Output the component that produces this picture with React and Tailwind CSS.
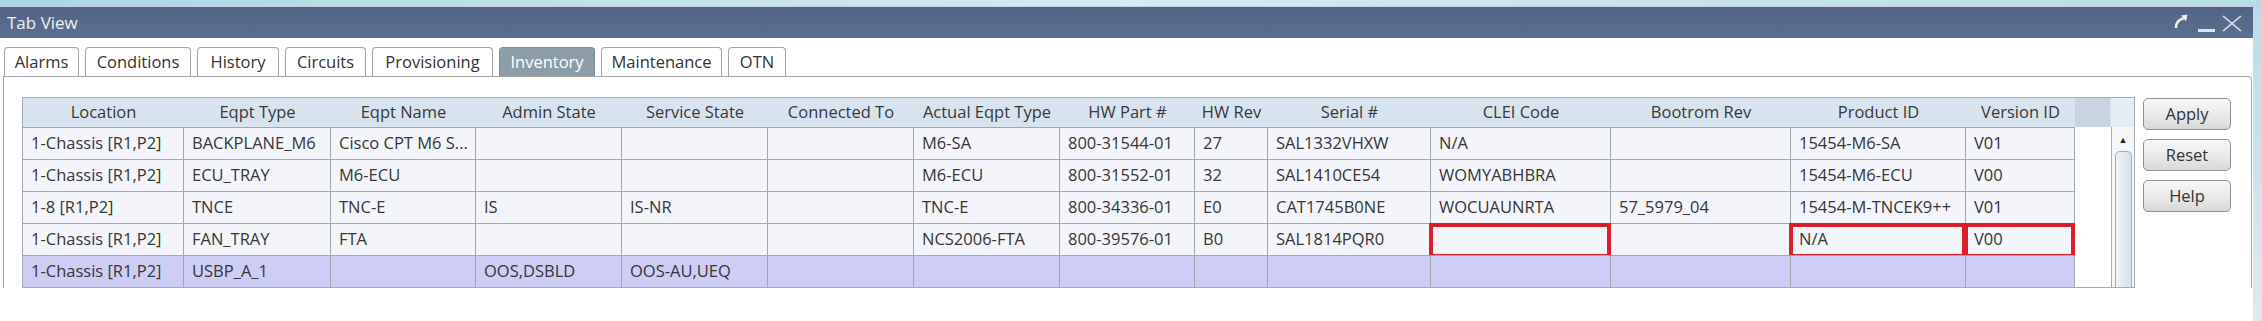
import React from 'react';

const cols = [
  { label: 'Location', w: 'w-[161px]' },
  { label: 'Eqpt Type', w: 'w-[147px]' },
  { label: 'Eqpt Name', w: 'w-[145px]' },
  { label: 'Admin State', w: 'w-[146px]' },
  { label: 'Service State', w: 'w-[146px]' },
  { label: 'Connected To', w: 'w-[146px]' },
  { label: 'Actual Eqpt Type', w: 'w-[146px]' },
  { label: 'HW Part #', w: 'w-[135px]' },
  { label: 'HW Rev', w: 'w-[73px]' },
  { label: 'Serial #', w: 'w-[163px]' },
  { label: 'CLEI Code', w: 'w-[180px]' },
  { label: 'Bootrom Rev', w: 'w-[180px]' },
  { label: 'Product ID', w: 'w-[175px]' },
  { label: 'Version ID', w: 'w-[109px]' },
];

const rows = [
  ['1-Chassis [R1,P2]', 'BACKPLANE_M6', 'Cisco CPT M6 S...', '', '', '', 'M6-SA', '800-31544-01', '27', 'SAL1332VHXW', 'N/A', '', '15454-M6-SA', 'V01'],
  ['1-Chassis [R1,P2]', 'ECU_TRAY', 'M6-ECU', '', '', '', 'M6-ECU', '800-31552-01', '32', 'SAL1410CE54', 'WOMYABHBRA', '', '15454-M6-ECU', 'V00'],
  ['1-8 [R1,P2]', 'TNCE', 'TNC-E', 'IS', 'IS-NR', '', 'TNC-E', '800-34336-01', 'E0', 'CAT1745B0NE', 'WOCUAUNRTA', '57_5979_04', '15454-M-TNCEK9++', 'V01'],
  ['1-Chassis [R1,P2]', 'FAN_TRAY', 'FTA', '', '', '', 'NCS2006-FTA', '800-39576-01', 'B0', 'SAL1814PQR0', '', '', 'N/A', 'V00'],
  ['1-Chassis [R1,P2]', 'USBP_A_1', '', 'OOS,DSBLD', 'OOS-AU,UEQ', '', '', '', '', '', '', '', '', ''],
];

// cells outlined in red on the FAN_TRAY row
const flagged = { 3: [10, 12, 13] };

const tabs = [
  { label: 'Alarms', w: 'w-[75px]' },
  { label: 'Conditions', w: 'w-[106px]' },
  { label: 'History', w: 'w-[82px]' },
  { label: 'Circuits', w: 'w-[81px]' },
  { label: 'Provisioning', w: 'w-[121px]' },
  { label: 'Inventory', w: 'w-[96px]', active: true },
  { label: 'Maintenance', w: 'w-[121px]' },
  { label: 'OTN', w: 'w-[58px]' },
];

function TitleBar() {
  return (
    <div className="h-[31px] flex items-center bg-linear-to-b from-[#50648a] to-[#5b6f8e] pl-[7px] pr-[11px]">
      <span className="text-[17px] text-[#eef2f6] leading-none">Tab View</span>
      <div className="ml-auto flex items-center h-full">
        <svg width="14" height="14" viewBox="0 0 14 14" className="mb-[3px]">
          <path d="M2 13 Q2.5 6.5 9 4.5" stroke="#e9eef3" strokeWidth="2.6" fill="none" strokeLinecap="round" />
          <path d="M7 1.5 L13.5 0.5 L12 7.5 Z" fill="#e9eef3" />
        </svg>
        <div className="w-[17px] h-[3px] bg-[#dde4ec] ml-[10px] mt-[16px]" />
        <svg width="20" height="17" viewBox="0 0 20 17" className="ml-[7px] mt-[2px]">
          <path d="M1 1 L19 16 M19 1 L1 16" stroke="#dfe6ee" strokeWidth="1.6" />
        </svg>
      </div>
    </div>
  );
}

function Tabs() {
  return (
    <div className="flex items-end gap-[6px] pl-[4px] h-[29px]">
      {tabs.map(t => (
        <div key={t.label}
          className={`${t.w} h-[29px] shrink-0 flex items-center justify-center rounded-t-[4px] border border-b-0 text-[16.5px] ${t.active ? 'bg-[#8c9da8] border-[#7f909b] text-white' : 'bg-white border-[#a2a2a2] text-[#333]'}`}>
          {t.label}
        </div>
      ))}
    </div>
  );
}

function Grid() {
  return (
    <div className="flex border border-[#a3acb4] bg-white">
      <div className="flex flex-col w-[2088px]">
        <div className="flex h-[29px] bg-[#d7e4ef]">
          {cols.map(c => (
            <div key={c.label} className={`${c.w} shrink-0 flex items-center justify-center text-[#383838] whitespace-nowrap`}>
              {c.label}
            </div>
          ))}
          <div className="w-[35px] shrink-0 bg-[#c8d5e0]" />
        </div>
        {rows.map((r, i) => {
          const sel = i === 4;
          return (
            <div key={i} className="flex h-[32px]">
              {r.map((v, j) => {
                const red = (flagged[i] || []).includes(j);
                return (
                  <div key={j}
                    className={`${cols[j].w} shrink-0 relative flex items-center pl-[8px] border-t border-r border-[#9ea8b1] whitespace-nowrap overflow-visible text-[#363636] ${sel ? 'bg-[#cdcdf6]' : 'bg-[#f3f5fa]'}`}>
                    {v}
                    {red && <div className="absolute -left-[2px] -right-[1px] -top-[1px] -bottom-[3px] border-[4px] border-[#d91f2b]" />}
                  </div>
                );
              })}
              <div className="w-[36px] shrink-0 bg-white" />
            </div>
          );
        })}
      </div>
      <div className="w-[23px] flex flex-col">
        <div className="h-[29px] bg-[#e5edf4]" />
        <div className="flex-1 border-l border-[#a3acb4] bg-[#f4f6f8] flex flex-col items-center">
          <div className="h-[24px] flex items-center justify-center text-[9px] text-[#222] leading-none">▲</div>
          <div className="w-[17px] flex-1 rounded-t-[5px] border border-b-0 border-[#9eb0bd] bg-linear-to-r from-[#eef3f7] to-[#d6e1e9]" />
        </div>
      </div>
    </div>
  );
}

function Btn({ children }) {
  return (
    <button className="w-[88px] h-[32px] rounded-[5px] border border-[#8f8f8f] bg-linear-to-b from-[#f7f7f7] via-[#ebebeb] to-[#d8d8d8] text-[16.5px] text-[#333] flex items-center justify-center">
      {children}
    </button>
  );
}

export default function App() {
  return (
    <div className="w-[2262px] h-[321px] bg-white overflow-hidden flex flex-col font-['Open_Sans','Noto_Sans',sans-serif] text-[16.5px]">
      <div className="h-[6px] shrink-0 bg-linear-to-r from-[#a8d6e6] via-[#d3ecf2] to-[#b6dce8]" />
      <div className="h-[1px] shrink-0 bg-[#c6d1da]" />
      <div className="flex flex-1">
        <div className="w-[2253px] flex flex-col">
          <TitleBar />
          <div className="h-[9px]" />
          <Tabs />
          <div className="ml-[3px] mr-[1px] h-[212px] border-t border-l border-r border-[#a6a6a6] rounded-tr-[4px] flex pt-[20px] pl-[18px]">
            <Grid />
            <div className="ml-[8px] mt-[1px] flex flex-col gap-[9px]">
              <Btn>Apply</Btn>
              <Btn>Reset</Btn>
              <Btn>Help</Btn>
            </div>
          </div>
        </div>
        <div className="flex-1 bg-linear-to-b from-[#bcdbe8] to-[#dfe8ef]" />
      </div>
    </div>
  );
}
